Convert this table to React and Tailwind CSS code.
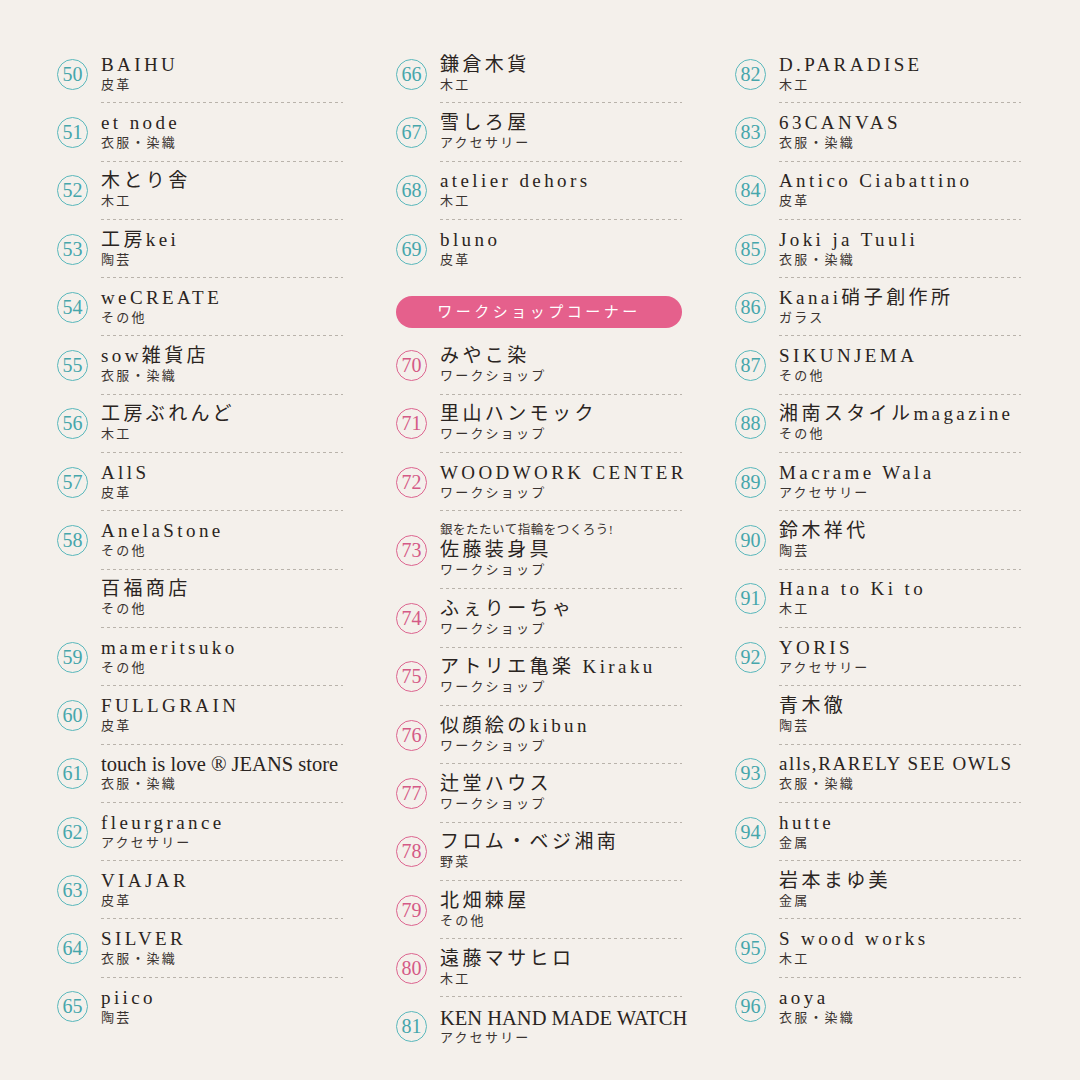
import React from 'react';

const SERIF = { fontFamily: '"Liberation Serif", "Noto Sans CJK JP", serif' };

const col1 = [
  { n: 50, name: 'BAIHU', cat: '皮革' },
  { n: 51, name: 'et node', cat: '衣服・染織' },
  { n: 52, name: '木とり舎', cat: '木工' },
  { n: 53, name: '工房kei', cat: '陶芸' },
  { n: 54, name: 'weCREATE', cat: 'その他' },
  { n: 55, name: 'sow雑貨店', cat: '衣服・染織' },
  { n: 56, name: '工房ぶれんど', cat: '木工' },
  { n: 57, name: 'AllS', cat: '皮革' },
  { n: 58, name: 'AnelaStone', cat: 'その他' },
  { name: '百福商店', cat: 'その他' },
  { n: 59, name: 'mameritsuko', cat: 'その他' },
  { n: 60, name: 'FULLGRAIN', cat: '皮革' },
  { n: 61, name: 'touch is love ® JEANS store', cat: '衣服・染織', plain: true },
  { n: 62, name: 'fleurgrance', cat: 'アクセサリー' },
  { n: 63, name: 'VIAJAR', cat: '皮革' },
  { n: 64, name: 'SILVER', cat: '衣服・染織' },
  { n: 65, name: 'piico', cat: '陶芸', last: true },
];

const col2 = [
  { n: 66, name: '鎌倉木貨', cat: '木工' },
  { n: 67, name: '雪しろ屋', cat: 'アクセサリー' },
  { n: 68, name: 'atelier dehors', cat: '木工' },
  { n: 69, name: 'bluno', cat: '皮革', last: true },
  { banner: true },
  { n: 70, name: 'みやこ染', cat: 'ワークショップ', pink: true },
  { n: 71, name: '里山ハンモック', cat: 'ワークショップ', pink: true },
  { n: 72, name: 'WOODWORK CENTER', cat: 'ワークショップ', pink: true },
  { n: 73, name: '佐藤装身具', cat: 'ワークショップ', pink: true, tag: '銀をたたいて指輪をつくろう!' },
  { n: 74, name: 'ふぇりーちゃ', cat: 'ワークショップ', pink: true },
  { n: 75, name: 'アトリエ亀楽 Kiraku', cat: 'ワークショップ', pink: true },
  { n: 76, name: '似顔絵のkibun', cat: 'ワークショップ', pink: true },
  { n: 77, name: '辻堂ハウス', cat: 'ワークショップ', pink: true },
  { n: 78, name: 'フロム・ベジ湘南', cat: '野菜', pink: true },
  { n: 79, name: '北畑棘屋', cat: 'その他', pink: true },
  { n: 80, name: '遠藤マサヒロ', cat: '木工', pink: true },
  { n: 81, name: 'KEN HAND MADE WATCH', cat: 'アクセサリー', plain: true, last: true },
];

const col3 = [
  { n: 82, name: 'D.PARADISE', cat: '木工' },
  { n: 83, name: '63CANVAS', cat: '衣服・染織' },
  { n: 84, name: 'Antico Ciabattino', cat: '皮革' },
  { n: 85, name: 'Joki ja Tuuli', cat: '衣服・染織' },
  { n: 86, name: 'Kanai硝子創作所', cat: 'ガラス' },
  { n: 87, name: 'SIKUNJEMA', cat: 'その他' },
  { n: 88, name: '湘南スタイルmagazine', cat: 'その他' },
  { n: 89, name: 'Macrame Wala', cat: 'アクセサリー' },
  { n: 90, name: '鈴木祥代', cat: '陶芸' },
  { n: 91, name: 'Hana to Ki to', cat: '木工' },
  { n: 92, name: 'YORIS', cat: 'アクセサリー' },
  { name: '青木徹', cat: '陶芸' },
  { n: 93, name: 'alls,RARELY SEE OWLS', cat: '衣服・染織', tight: true },
  { n: 94, name: 'hutte', cat: '金属' },
  { name: '岩本まゆ美', cat: '金属' },
  { n: 95, name: 'S wood works', cat: '木工' },
  { n: 96, name: 'aoya', cat: '衣服・染織', last: true },
];

function Badge({ n, pink }) {
  return (
    <div
      className={`w-[31px] h-[31px] rounded-full border-[1.6px] flex items-center justify-center text-[20px] leading-none ${
        pink ? 'border-[#dd6590] text-[#d45a86]' : 'border-[#5ab8bc] text-[#46a6ab]'
      }`}
      style={SERIF}
    >
      <span className="-mt-px">{n}</span>
    </div>
  );
}

function Row({ item }) {
  if (item.banner) {
    return (
      <div className="h-[58.3px] flex items-end pb-[8px]">
        <div
          className="w-full h-[32px] rounded-full bg-[#e5608c] text-white flex items-center justify-center text-[15px] tracking-[3.5px]"
          style={SERIF}
        >
          ワークショップコーナー
        </div>
      </div>
    );
  }

  const nameTrack = item.plain
    ? 'text-[20.5px] tracking-normal'
    : item.tight
    ? 'text-[19px] tracking-[1.6px]'
    : 'text-[19px] tracking-[3.4px]';

  return (
    <div className={`flex ${item.tag ? 'h-[78px]' : 'h-[58.3px]'}`}>
      <div className="w-[44px] shrink-0 flex items-center">
        {item.n && <Badge n={item.n} pink={item.pink} />}
      </div>
      <div className="flex-1 flex flex-col min-w-0">
        <div className="flex-1 flex flex-col justify-center text-[#2a2421]" style={SERIF}>
          {item.tag && (
            <div className="text-[12.5px] leading-[18px] tracking-[0.5px] text-[#3a3330]">{item.tag}</div>
          )}
          <div className={`leading-[22px] whitespace-nowrap ${nameTrack}`}>{item.name}</div>
          <div className="text-[13px] leading-[18px] tracking-[2.2px] text-[#3a3330]">{item.cat}</div>
        </div>
        {!item.last && (
          <div className="h-px shrink-0 bg-[repeating-linear-gradient(to_right,#b9b3ab_0_3px,transparent_3px_6px)]" />
        )}
      </div>
    </div>
  );
}

function Column({ items }) {
  return (
    <div className="flex flex-col">
      {items.map((it, i) => (
        <Row key={i} item={it} />
      ))}
    </div>
  );
}

export default function App() {
  return (
    <div className="w-[1080px] h-[1080px] bg-[#f4f0eb] overflow-hidden pl-[57px] pt-[45px]">
      <div className="grid grid-cols-[286px_286px_286px] gap-x-[53px]">
        <Column items={col1} />
        <Column items={col2} />
        <Column items={col3} />
      </div>
    </div>
  );
}
